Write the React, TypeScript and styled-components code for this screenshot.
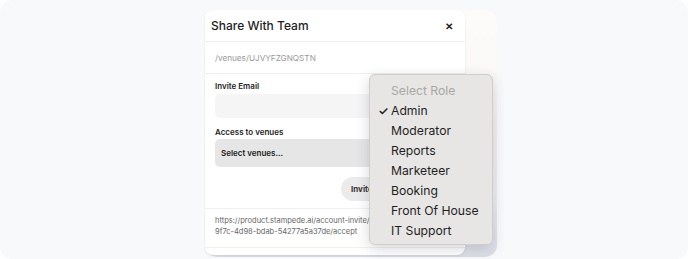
import React from 'react'
import styled, { createGlobalStyle } from 'styled-components'

const GlobalStyle = createGlobalStyle`
  html, body {
    margin: 0;
    padding: 0;
    background: #ffffff;
  }
  body {
    font-family: Inter, "Noto Sans", sans-serif;
    -webkit-font-smoothing: antialiased;
  }
`

const roles = ['Admin', 'Moderator', 'Reports', 'Marketeer', 'Booking', 'Front Of House', 'IT Support']

const App: React.FC = () => {
  const selected = 'Admin'

  return (
    <>
      <GlobalStyle />
      <Stage>
        <Backdrop>
          <Modal>
            <Header>
              <Title>Share With Team</Title>
              <CloseBtn>✕</CloseBtn>
            </Header>
            <PathRow>/venues/UJVYFZGNQSTN</PathRow>
            <FormBody>
              <Label>Invite Email</Label>
              <Field />
              <Label>Access to venues</Label>
              <Field $dark>Select venues...</Field>
              <ButtonRow>
                <InviteBtn>Invite</InviteBtn>
              </ButtonRow>
            </FormBody>
            <LinkRow>
              https://product.stampede.ai/account-invite/ab
              <br />
              9f7c-4d98-bdab-54277a5a37de/accept
            </LinkRow>
          </Modal>
          <RoleMenu>
            <MenuItem $muted>Select Role</MenuItem>
            {roles.map((r) => (
              <MenuItem key={r}>
                <Check>{r === selected ? '✓' : ''}</Check>
                {r}
              </MenuItem>
            ))}
          </RoleMenu>
        </Backdrop>
      </Stage>
    </>
  )
}

export default App

const Stage = styled.div`
  width: 688px;
  height: 259px;
  box-sizing: border-box;
  padding: 10px 0 0 205px;
  border-radius: 12px;
  background: #f8f9fb;
  overflow: hidden;
`

const Backdrop = styled.div`
  position: relative;
  width: 292px;
  height: 247px;
  border-radius: 12px;
  background: linear-gradient(180deg, #fdfcfb 0%, #fbf8f6 30%, #f6eeee 50%, #eeeef2 75%, #dcdee8 100%);
`

const Modal = styled.div`
  display: flex;
  flex-direction: column;
  width: 260px;
  height: 245px;
  border-radius: 8px;
  background: #ffffff;
  box-shadow: 0 1px 3px rgba(0, 0, 0, 0.08);
`

const Header = styled.div`
  display: flex;
  align-items: center;
  justify-content: space-between;
  height: 31px;
  padding: 0 12px 0 6px;
  border-bottom: 1px solid #efefef;
`

const Title = styled.span`
  font-size: 12px;
  font-weight: 500;
  color: #1d1d1f;
`

const CloseBtn = styled.span`
  font-size: 10px;
  font-weight: 700;
  color: #222;
`

const PathRow = styled.div`
  height: 31px;
  display: flex;
  align-items: center;
  padding: 0 10px;
  font-size: 8.2px;
  color: #9a9a9a;
  border-bottom: 1px solid #efefef;
`

const FormBody = styled.div`
  display: flex;
  flex-direction: column;
  padding: 8px 10px 7px 10px;
`

const Label = styled.div`
  font-size: 8px;
  line-height: 9px;
  font-weight: 600;
  color: #1d1d1f;
  margin-bottom: 3px;
`

const Field = styled.div<{ $dark?: boolean }>`
  display: flex;
  align-items: center;
  height: ${(p) => (p.$dark ? '28px' : '24px')};
  margin-bottom: 10px;
  margin-top: ${(p) => (p.$dark ? '-1px' : '0')};
  padding: 0 6px;
  border-radius: 5px;
  background: ${(p) => (p.$dark ? '#e6e6e6' : '#f5f5f5')};
  font-size: 8px;
  font-weight: 600;
  color: #222;
`

const ButtonRow = styled.div`
  display: flex;
  justify-content: flex-start;
  padding-left: 126px;
`

const InviteBtn = styled.div`
  display: flex;
  align-items: center;
  height: 24px;
  padding: 0 30px 0 10px;
  border-radius: 12px;
  background: #ebebeb;
  font-size: 8px;
  font-weight: 700;
  color: #333;
`

const LinkRow = styled.div`
  padding: 6px 10px 10px 10px;
  font-size: 7.5px;
  line-height: 11px;
  color: #666;
  border-top: 1px solid #f1f1f1;
  border-bottom: 1px solid #f1f1f1;
`

const RoleMenu = styled.div`
  position: absolute;
  left: 164px;
  top: 64px;
  width: 124px;
  box-sizing: border-box;
  padding: 5px 0 4px 0;
  border-radius: 6px;
  border: 1px solid #cfcecc;
  background: #e7e6e4;
  box-shadow: 0 4px 14px rgba(40, 40, 60, 0.18);
`

const MenuItem = styled.div<{ $muted?: boolean }>`
  display: flex;
  align-items: center;
  height: 20px;
  padding-left: ${(p) => (p.$muted ? '21px' : '8px')};
  font-size: 12.2px;
  color: ${(p) => (p.$muted ? '#a9a8a6' : '#1f1f1f')};
`

const Check = styled.span`
  display: inline-block;
  width: 13px;
  font-size: 12px;
  font-weight: 600;
`
